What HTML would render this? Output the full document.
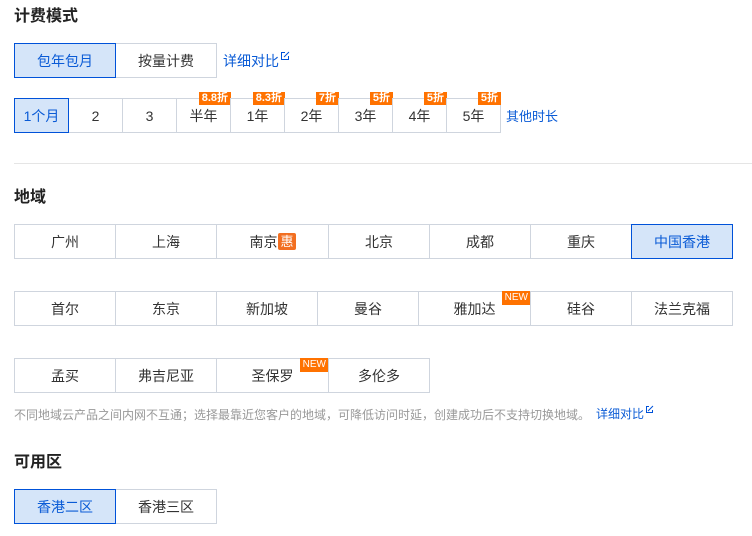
<!DOCTYPE html>
<html><head><meta charset="utf-8"><style>
*{margin:0;padding:0;box-sizing:border-box}
body{width:752px;height:536px;background:#fff;position:relative;overflow:hidden;font-family:"Liberation Sans","Noto Sans CJK SC",sans-serif;color:#333;font-size:14px}
.t{position:absolute;left:14px;font-size:16px;font-weight:bold;color:#222}
.c{position:absolute;border:1px solid #cfd5de;background:#fff;display:flex;align-items:center;justify-content:center;font-size:14px;color:#333}
.s{background:#d5e5f9;border-color:#0052d9;color:#0a5bd6;z-index:2}
.b{position:absolute;top:-7px;right:-1px;background:#ff7200;color:#fff;font-size:11px;font-weight:bold;line-height:13px;padding:0 3px;height:13px}
.n{position:absolute;top:-1px;right:-1px;background:#ff7200;color:#fff;font-size:10px;line-height:13px;padding:0 3px;height:14px}
.l{position:absolute;color:#0a5bd6;font-size:14px}
.ext{display:inline-block;width:8px;height:8px;border:1px solid #0052d9;margin-left:2px;vertical-align:6px;position:relative}
.ext:after{content:"";position:absolute;right:-2px;top:-2px;width:5px;height:5px;background:#fff;}
.ext:before{content:"";position:absolute;right:-2px;top:1px;width:7px;height:1px;background:#0052d9;transform:rotate(-45deg);z-index:1}
</style></head><body>
<div class="t" style="top:2px">计费模式</div>
<div class="c s" style="left:14px;top:43px;width:102px;height:35px">包年包月</div>
<div class="c" style="left:115px;top:43px;width:102px;height:35px">按量计费</div>
<div class="l" style="left:223px;top:51px">详细对比<span class="ext"></span></div>

<div class="c s" style="left:14px;top:98px;width:55px;height:35px">1个月</div>
<div class="c" style="left:68px;top:98px;width:55px;height:35px">2</div>
<div class="c" style="left:122px;top:98px;width:55px;height:35px">3</div>
<div class="c" style="left:176px;top:98px;width:55px;height:35px">半年<span class="b">8.8折</span></div>
<div class="c" style="left:230px;top:98px;width:55px;height:35px">1年<span class="b">8.3折</span></div>
<div class="c" style="left:284px;top:98px;width:55px;height:35px">2年<span class="b">7折</span></div>
<div class="c" style="left:338px;top:98px;width:55px;height:35px">3年<span class="b">5折</span></div>
<div class="c" style="left:392px;top:98px;width:55px;height:35px">4年<span class="b">5折</span></div>
<div class="c" style="left:446px;top:98px;width:55px;height:35px">5年<span class="b">5折</span></div>
<div class="l" style="left:506px;top:106px;font-size:13px">其他时长</div>

<div style="position:absolute;left:14px;top:163px;width:738px;height:1px;background:#e5e5e5"></div>

<div class="t" style="top:183px">地域</div>
<div class="c" style="left:14px;top:224px;width:102px;height:35px">广州</div>
<div class="c" style="left:115px;top:224px;width:102px;height:35px">上海</div>
<div class="c" style="left:216px;top:224px;width:113px;height:35px">南京<span style="background:#f26f21;color:#fff;font-size:13px;line-height:17px;padding:0 2px;border-radius:2px;margin-left:1px">惠</span></div>
<div class="c" style="left:328px;top:224px;width:102px;height:35px">北京</div>
<div class="c" style="left:429px;top:224px;width:102px;height:35px">成都</div>
<div class="c" style="left:530px;top:224px;width:102px;height:35px">重庆</div>
<div class="c s" style="left:631px;top:224px;width:102px;height:35px">中国香港</div>

<div class="c" style="left:14px;top:291px;width:102px;height:35px">首尔</div>
<div class="c" style="left:115px;top:291px;width:102px;height:35px">东京</div>
<div class="c" style="left:216px;top:291px;width:102px;height:35px">新加坡</div>
<div class="c" style="left:317px;top:291px;width:102px;height:35px">曼谷</div>
<div class="c" style="left:418px;top:291px;width:113px;height:35px">雅加达<span class="n">NEW</span></div>
<div class="c" style="left:530px;top:291px;width:102px;height:35px">硅谷</div>
<div class="c" style="left:631px;top:291px;width:102px;height:35px">法兰克福</div>

<div class="c" style="left:14px;top:358px;width:102px;height:35px">孟买</div>
<div class="c" style="left:115px;top:358px;width:102px;height:35px">弗吉尼亚</div>
<div class="c" style="left:216px;top:358px;width:113px;height:35px">圣保罗<span class="n">NEW</span></div>
<div class="c" style="left:328px;top:358px;width:102px;height:35px">多伦多</div>

<div style="position:absolute;left:14px;top:406px;font-size:12px;color:#999;white-space:nowrap">不同地域云产品之间内网不互通；选择最靠近您客户的地域，可降低访问时延，创建成功后不支持切换地域。</div>
<div class="l" style="left:596px;top:405px;font-size:12px">详细对比<span class="ext" style="width:7px;height:7px;vertical-align:5px"></span></div>

<div class="t" style="top:448px">可用区</div>
<div class="c s" style="left:14px;top:489px;width:102px;height:35px">香港二区</div>
<div class="c" style="left:115px;top:489px;width:102px;height:35px">香港三区</div>
</body></html>
